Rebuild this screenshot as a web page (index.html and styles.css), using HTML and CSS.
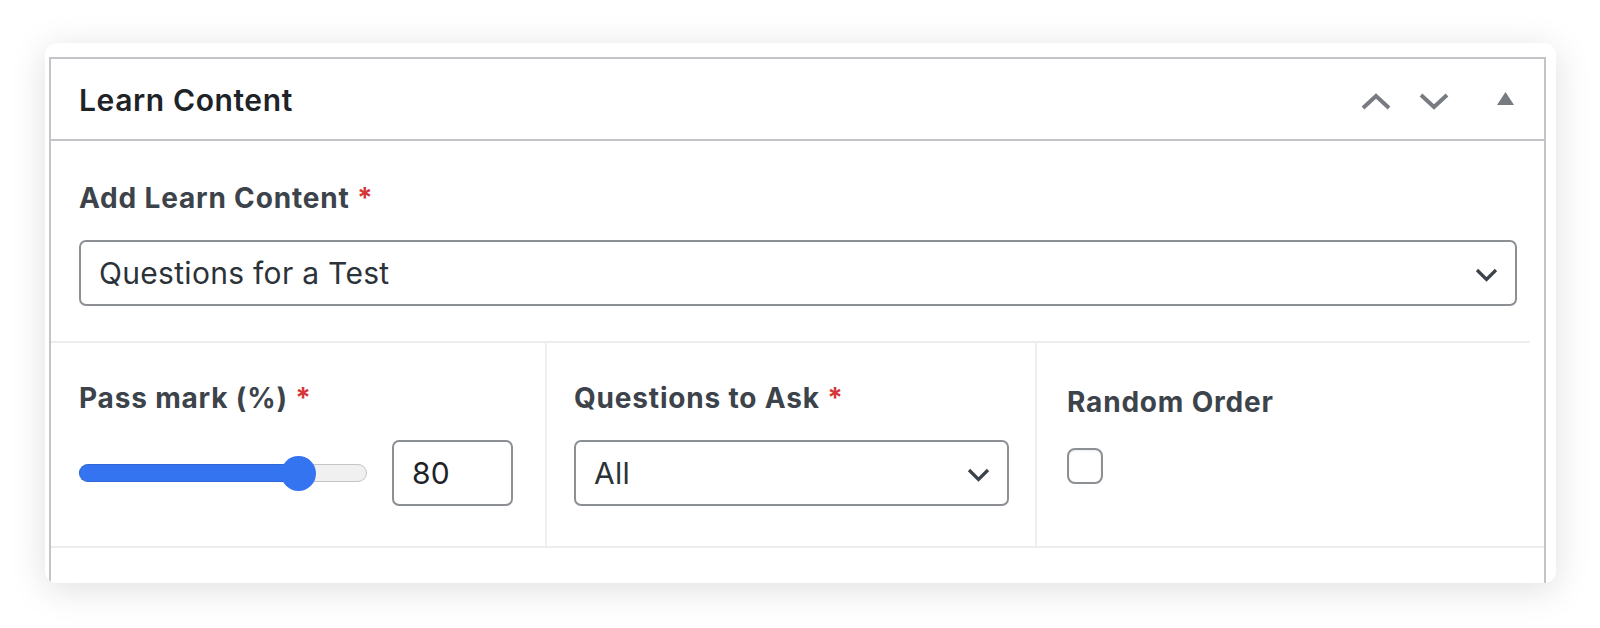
FILE: index.html
```html
<!DOCTYPE html>
<html lang="en">
<head>
<meta charset="utf-8">
<title>Learn Content</title>
<link rel="stylesheet" href="styles.css">
</head>
<body>
<div class="card">
  <div class="panel">
    <div class="panel-header">
      <h2 class="panel-title">Learn Content</h2>
      <div class="panel-actions">
        <svg class="icon-chev" width="30" height="17" viewBox="0 0 30 17"><polyline points="2,15 15,3 28,15" fill="none" stroke="#787c82" stroke-width="4"/></svg>
        <svg class="icon-chev icon-down" width="30" height="17" viewBox="0 0 30 17"><polyline points="2,2 15,14 28,2" fill="none" stroke="#787c82" stroke-width="4"/></svg>
        <svg class="icon-tri" width="17" height="13" viewBox="0 0 17 13"><polygon points="8.5,0 17,13 0,13" fill="#787c82"/></svg>
      </div>
    </div>

    <div class="field-top">
      <div class="label">Add Learn Content <span class="req">*</span></div>
      <div class="select select-wide">
        <span class="select-text">Questions for a Test</span>
        <svg class="select-arrow" width="23" height="14" viewBox="0 0 23 14"><polyline points="2,2 11.5,11.5 21,2" fill="none" stroke="#3c434a" stroke-width="3.2"/></svg>
      </div>
    </div>

    <div class="field-row">
      <div class="col col-pass">
        <div class="label">Pass mark (%) <span class="req">*</span></div>
        <div class="range-line">
          <div class="range" style="--v: 0.8">
            <div class="range-track"></div>
            <div class="range-fill"></div>
            <div class="range-thumb"></div>
          </div>
          <div class="num-input">80</div>
        </div>
      </div>
      <div class="col col-ask">
        <div class="label">Questions to Ask <span class="req">*</span></div>
        <div class="select">
          <span class="select-text">All</span>
          <svg class="select-arrow" width="23" height="14" viewBox="0 0 23 14"><polyline points="2,2 11.5,11.5 21,2" fill="none" stroke="#3c434a" stroke-width="3.2"/></svg>
        </div>
      </div>
      <div class="col col-random">
        <div class="label">Random Order</div>
        <div class="checkbox"></div>
      </div>
    </div>
    <div class="panel-foot"></div>
  </div>
</div>
</body>
</html>
```

FILE: styles.css
```css
* { box-sizing: border-box; }

html, body {
  margin: 0;
  padding: 0;
  background: #ffffff;
}

body {
  font-family: Inter, "Noto Sans", "Liberation Sans", sans-serif;
  width: 1600px;
  height: 628px;
  overflow: hidden;
  padding: 43px 0 0 45px;
}

.card {
  width: 1511px;
  height: 540px;
  background: #ffffff;
  border-radius: 12px;
  box-shadow: 0 6px 36px rgba(0, 0, 0, 0.13);
  padding: 14px 10px 0 4px;
  overflow: hidden;
}

.panel {
  border: 2px solid #c3c4c7;
  border-bottom: none;
  background: #ffffff;
}

.panel-header {
  height: 82px;
  border-bottom: 2px solid #c3c4c7;
  display: flex;
  align-items: center;
  padding-left: 28px;
}

.panel-title {
  margin: 0;
  font-size: 30px;
  font-weight: 600;
  letter-spacing: 0.6px;
  color: #1d2327;
  line-height: 36px;
  flex: 1;
  padding-top: 1px;
}

.panel-actions {
  display: flex;
  align-items: center;
  padding-right: 30px;
  padding-top: 4px;
}

.icon-chev { display: block; }
.icon-down { margin-left: 28px; }
.icon-tri { display: block; margin-left: 48px; margin-top: -5px; }

.label {
  font-size: 28px;
  font-weight: 700;
  letter-spacing: 0.82px;
  line-height: 34px;
  color: #3c434a;
  white-space: nowrap;
}

.req {
  color: #d63638;
  letter-spacing: 0;
}

.field-top {
  margin-right: 14px;
  border-bottom: 2px solid #ededed;
  padding: 40px 13px 35px 28px;
}

.field-top .label { margin-bottom: 25px; }

.select {
  height: 66px;
  border: 2px solid #8c8f94;
  border-radius: 7px;
  display: flex;
  align-items: center;
  padding: 0 17px 0 18px;
  background: #ffffff;
}

.select-text {
  flex: 1;
  font-size: 30px;
  font-weight: 400;
  letter-spacing: 0.3px;
  color: #2c3338;
  line-height: 36px;
}

.select-arrow { display: block; margin-top: 3px; }

.field-row {
  display: grid;
  grid-template-columns: 496px 490px 1fr;
  border-bottom: 2px solid #ededed;
}

.col {
  padding: 38px 26px 40px 28px;
  border-right: 2px solid #f0f0f0;
}

.col-random { border-right: none; padding-top: 42px; padding-left: 30px; }

.col .label { margin-bottom: 25px; }
.col-random .label { margin-bottom: 29px; }

.col-ask { padding-left: 27px; }

.range-line {
  display: flex;
  align-items: center;
  height: 66px;
}

.range {
  position: relative;
  width: 288px;
  height: 35px;
  margin-right: 25px;
}

.range-track {
  position: absolute;
  left: 0;
  right: 0;
  top: 8.5px;
  height: 18px;
  border-radius: 9px;
  background: #f0f0f1;
  border: 1.5px solid #c3c4c7;
}

.range-fill {
  position: absolute;
  left: 0;
  top: 8.5px;
  height: 18px;
  width: calc(17.5px + var(--v) * (100% - 35px));
  border-radius: 9px 0 0 9px;
  background: #3474f0;
  border: 1px solid #2f68d6;
  border-right: none;
}

.range-thumb {
  position: absolute;
  top: 0;
  left: calc(var(--v) * (100% - 35px));
  width: 35px;
  height: 35px;
  border-radius: 50%;
  background: #3474f0;
}

.num-input {
  width: 121px;
  height: 66px;
  border: 2px solid #8c8f94;
  border-radius: 7px;
  display: flex;
  align-items: center;
  padding-left: 18px;
  font-size: 30px;
  letter-spacing: 0.3px;
  color: #1d2327;
}

.checkbox {
  width: 36px;
  height: 36px;
  border: 2px solid #8c8f94;
  border-radius: 8px;
  background: #ffffff;
  box-shadow: inset 0 1px 2px rgba(0, 0, 0, 0.08);
}

.panel-foot {
  height: 60px;
}
```
